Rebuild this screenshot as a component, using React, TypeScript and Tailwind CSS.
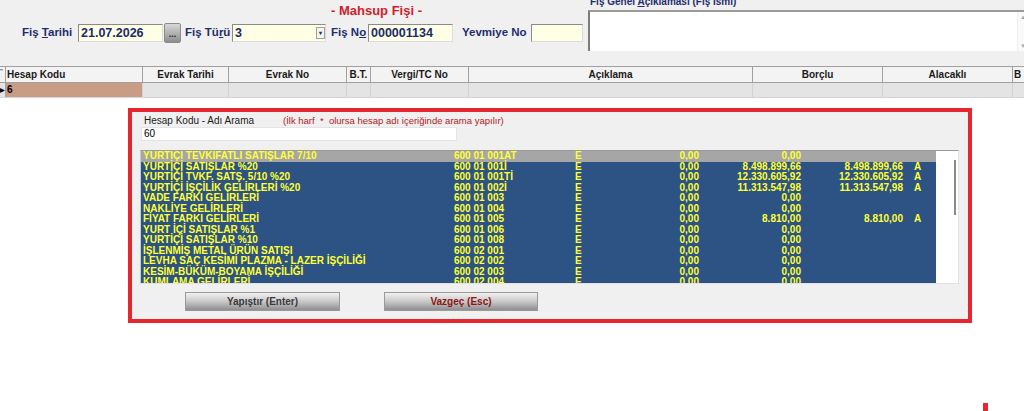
import React from 'react'

type Row = { name: string; code: string; b: string; c: string; d: string; a: string }

const rows: Row[] = [
  { name: 'YURTİÇİ TEVKİFATLI SATIŞLAR 7/10', code: '600 01 001AT', b: '0,00', c: '0,00', d: '', a: '' },
  { name: 'YURTİÇİ SATIŞLAR %20', code: '600 01 001İ', b: '0,00', c: '8.498.899,66', d: '8.498.899,66', a: 'A' },
  { name: 'YURTİÇİ TVKF. SATŞ. 5/10 %20', code: '600 01 001Tİ', b: '0,00', c: '12.330.605,92', d: '12.330.605,92', a: 'A' },
  { name: 'YURTİÇİ İŞÇİLİK GELİRLERİ %20', code: '600 01 002İ', b: '0,00', c: '11.313.547,98', d: '11.313.547,98', a: 'A' },
  { name: 'VADE FARKI GELİRLERİ', code: '600 01 003', b: '0,00', c: '0,00', d: '', a: '' },
  { name: 'NAKLİYE GELİRLERİ', code: '600 01 004', b: '0,00', c: '0,00', d: '', a: '' },
  { name: 'FİYAT FARKI GELİRLERİ', code: '600 01 005', b: '0,00', c: '8.810,00', d: '8.810,00', a: 'A' },
  { name: 'YURT İÇİ SATIŞLAR %1', code: '600 01 006', b: '0,00', c: '0,00', d: '', a: '' },
  { name: 'YURTİÇİ SATIŞLAR %10', code: '600 01 008', b: '0,00', c: '0,00', d: '', a: '' },
  { name: 'İŞLENMİŞ METAL ÜRÜN SATIŞI', code: '600 02 001', b: '0,00', c: '0,00', d: '', a: '' },
  { name: 'LEVHA SAÇ KESİMİ PLAZMA - LAZER İŞÇİLİĞİ', code: '600 02 002', b: '0,00', c: '0,00', d: '', a: '' },
  { name: 'KESİM-BÜKÜM-BOYAMA İŞÇİLİĞİ', code: '600 02 003', b: '0,00', c: '0,00', d: '', a: '' },
  { name: 'KUMLAMA GELİRLERİ', code: '600 02 004', b: '0,00', c: '0,00', d: '', a: '' },
]

const columns = [
  { label: 'Hesap Kodu', w: 'w-[137px]', left: true },
  { label: 'Evrak Tarihi', w: 'w-[86px]' },
  { label: 'Evrak No', w: 'w-[118px]' },
  { label: 'B.T.', w: 'w-[24px]' },
  { label: 'Vergi/TC No', w: 'w-[98px]' },
  { label: 'Açıklama', w: 'w-[284px]' },
  { label: 'Borçlu', w: 'w-[130px]' },
  { label: 'Alacaklı', w: 'w-[130px]' },
  { label: 'B', w: 'w-[40px]', left: true },
]

function Field({ w, value, combo }: { w: string; value?: string; combo?: boolean }) {
  return (
    <div
      className={`${w} flex h-[18px] shrink-0 items-center border border-t-[#8a8a8a] border-l-[#8a8a8a] border-r-[#dcdcdc] border-b-[#dcdcdc] bg-[#ffffe6] pl-[2px] text-[12.5px] font-bold text-[#1b2a6b]`}
    >
      <span className="flex-1">{value}</span>
      {combo && (
        <span className="flex h-[12px] w-[9px] items-center justify-center border border-[#a0a0a0] bg-[#f4f4f4] text-[6px] leading-none text-[#333]">
          ▾
        </span>
      )}
    </div>
  )
}

function Label({ w, children }: { w: string; children: React.ReactNode }) {
  return (
    <span className={`${w} shrink-0 whitespace-nowrap text-[11.5px] font-bold text-[#1f2d6e]`}>{children}</span>
  )
}

export default function App() {
  return (
    <div className="relative h-[411px] w-[1024px] overflow-hidden bg-white font-['Liberation_Sans',Arial,sans-serif]">
      {/* fiş başlığı */}
      <div className="flex h-[66px] bg-[#f0f0f0]">
        <div className="flex w-[588px] shrink-0 flex-col">
          <div className="h-[23px] pl-[331px] pt-[3px] text-[13px] font-bold leading-[16px] text-[#d0202a]">
            - Mahsup Fişi -
          </div>
          <div className="flex h-[20px] items-center pl-[22px]">
            <Label w="w-[56px]">
              Fiş <span className="underline">T</span>arihi
            </Label>
            <Field w="w-[85px]" value="21.07.2026" />
            <button className="ml-[1px] flex h-[20px] w-[17px] shrink-0 items-end justify-center rounded-[2px] border border-[#8c8c8c] bg-gradient-to-b from-[#d8d8d8] to-[#8e8e8e] pb-[3px] text-[9px] font-bold leading-none text-[#222]">
              ...
            </button>
            <span className="ml-[4px]" />
            <Label w="w-[47px]">
              Fiş Tü<span className="underline">r</span>ü
            </Label>
            <Field w="w-[94px]" value="3" combo />
            <span className="ml-[5px]" />
            <Label w="w-[37px]">
              Fiş N<span className="underline">o</span>
            </Label>
            <Field w="w-[85px]" value="000001134" />
            <span className="ml-[9px]" />
            <Label w="w-[69px]">Yevmiye No</Label>
            <Field w="w-[52px]" />
          </div>
        </div>
        <div className="flex flex-col">
          <div className="-mt-[3px] h-[10px] whitespace-nowrap pl-[2px] text-[10px] font-bold leading-[10px] text-[#1f2d6e]">
            Fiş Genel <span className="underline">A</span>çıklaması (Fiş İsmi)
          </div>
          <div className="mt-[3px] flex h-[41px] w-[440px] border-l-2 border-t-2 border-l-[#7c7c7c] border-t-[#9a9a9a] bg-white">
            <div className="w-[427px]" />
            <div className="flex w-[11px] flex-col items-center justify-between border-l border-[#eeeeee] bg-[#fafafa] py-[2px] text-[6px] leading-none text-[#a8a8a8]">
              <span>▲</span>
              <span>▼</span>
            </div>
          </div>
        </div>
      </div>

      {/* satır tablosu */}
      <div className="border-t border-[#a0a0a0]">
        <div className="flex h-[16px] border-b border-[#a0a0a0] bg-[#f3f3f3] text-[10px] font-bold leading-[15px] text-[#1a1a1a]">
          <div className="w-[6px] shrink-0 border-r border-[#a0a0a0] text-[6px] leading-[8px] text-[#555]">"</div>
          {columns.map((c) => (
            <div
              key={c.label}
              className={`${c.w} shrink-0 border-r border-[#a0a0a0] ${c.left ? 'pl-[1px] text-left' : 'text-center'}`}
            >
              {c.label}
            </div>
          ))}
        </div>
        <div className="flex h-[15px] border-b border-[#d6d6d6] bg-[#e4e4e4] text-[10px] font-bold leading-[14px] text-black">
          <div className="flex w-[6px] shrink-0 items-center justify-center border-r border-[#a0a0a0] text-[6px]">▶</div>
          {columns.map((c, i) => (
            <div
              key={c.label}
              className={`${c.w} shrink-0 border-r border-[#d2d2d2] ${i === 0 ? 'bg-[#c99c86] pl-[1px]' : ''}`}
            >
              {i === 0 ? '6' : ''}
            </div>
          ))}
        </div>
      </div>

      {/* hesap arama penceresi */}
      <div className="ml-[128px] mt-[10px] h-[215px] w-[844px] border-4 border-[#e6282e] bg-[#f0f0f0]">
        <div className="flex h-[12px] pl-[12px] pt-[3px] text-[10px] leading-[12px]">
          <span className="w-[139px] shrink-0 text-[#1a1a1a]">Hesap Kodu - Adı Arama</span>
          <span className="whitespace-pre text-[9.5px] text-[#b0181c]">
            (İlk harf  *  olursa hesap adı içeriğinde arama yapılır)
          </span>
        </div>
        <div className="ml-[9px] mt-[3px] h-[14px] w-[316px] border border-[#e4e4e4] bg-white pl-[2px] text-[10px] leading-[12px] text-black">
          60
        </div>
        <div className="ml-[8px] mt-[9px] flex h-[134px] w-[819px] border border-t-[#9a9a9a] border-l-[#c8c8c8] border-r-[#e2e2e2] border-b-[#e2e2e2] bg-white">
          <div className="w-[795px] shrink-0 overflow-hidden bg-[#2d5384] text-[10px] font-bold text-[#ffff33]">
            {rows.map((r, i) => (
              <div
                key={r.code}
                className={`flex h-[10.5px] items-center whitespace-nowrap leading-[10.5px] ${i === 0 ? 'bg-[#a6a6a6]' : ''}`}
              >
                <span className="w-[313px] shrink-0 pl-[2px]">{r.name}</span>
                <span className="w-[121px] shrink-0">{r.code}</span>
                <span className="w-[30px] shrink-0">E</span>
                <span className="w-[94px] shrink-0 text-right">{r.b}</span>
                <span className="w-[102px] shrink-0 text-right">{r.c}</span>
                <span className="w-[102px] shrink-0 text-right">{r.d}</span>
                <span className="pl-[11px]">{r.a}</span>
              </div>
            ))}
          </div>
          <div className="flex flex-1 justify-end pr-[2px] pt-[9px]">
            <div className="h-[55px] w-[2px] bg-[#8a8a8a]" />
          </div>
        </div>
        <div className="mt-[8px] flex pl-[53px]">
          <button className="h-[19px] w-[155px] border border-[#9a9a9a] bg-gradient-to-b from-[#f2f2f2] via-[#c8c8c8] to-[#8f8f8f] text-[10px] font-bold text-[#3a3a3a]">
            Yapıştır (Enter)
          </button>
          <button className="ml-[44px] h-[19px] w-[154px] border border-[#9a9a9a] bg-gradient-to-b from-[#f2f2f2] via-[#c8c8c8] to-[#8f8f8f] text-[10px] font-bold text-[#8e1414]">
            Vazgeç (Esc)
          </button>
        </div>
      </div>

      <div className="absolute left-[983px] top-[403px] h-[8px] w-[5px] bg-[#e6282e]" />
    </div>
  )
}
